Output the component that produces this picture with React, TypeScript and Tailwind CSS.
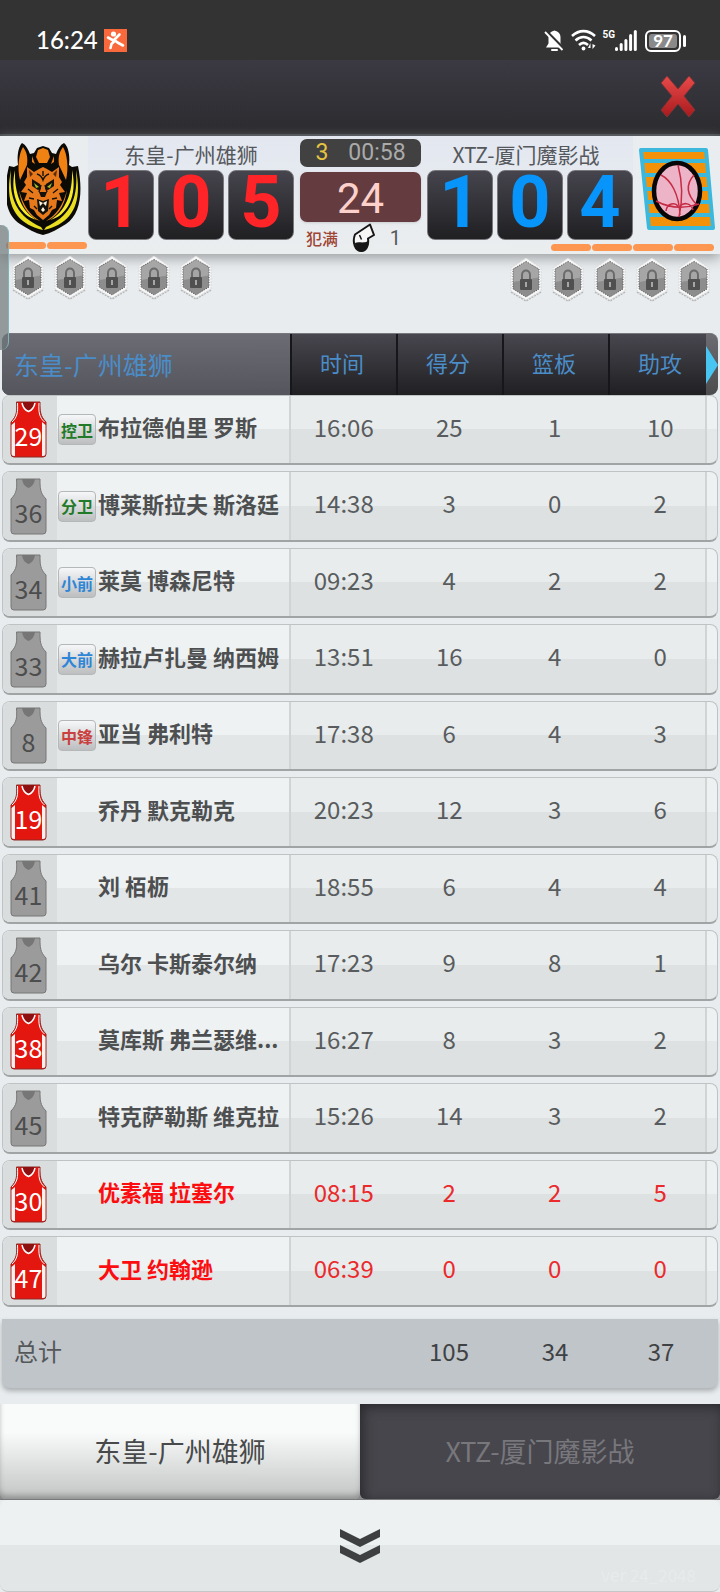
import { useState } from 'react';
import clsx from 'clsx';

interface Player {
  no: number;
  name: string;
  pos?: string;
  time: string;
  pts: number;
  reb: number;
  ast: number;
  home?: boolean;
  out?: boolean;
}

const players: Player[] = [
  { no: 29, name: '布拉德伯里 罗斯', pos: '控卫', time: '16:06', pts: 25, reb: 1, ast: 10, home: true },
  { no: 36, name: '博莱斯拉夫 斯洛廷', pos: '分卫', time: '14:38', pts: 3, reb: 0, ast: 2 },
  { no: 34, name: '莱莫 博森尼特', pos: '小前', time: '09:23', pts: 4, reb: 2, ast: 2 },
  { no: 33, name: '赫拉卢扎曼 纳西姆', pos: '大前', time: '13:51', pts: 16, reb: 4, ast: 0 },
  { no: 8, name: '亚当 弗利特', pos: '中锋', time: '17:38', pts: 6, reb: 4, ast: 3 },
  { no: 19, name: '乔丹 默克勒克', time: '20:23', pts: 12, reb: 3, ast: 6, home: true },
  { no: 41, name: '刘 栢枥', time: '18:55', pts: 6, reb: 4, ast: 4 },
  { no: 42, name: '乌尔 卡斯泰尔纳', time: '17:23', pts: 9, reb: 8, ast: 1 },
  { no: 38, name: '莫库斯 弗兰瑟维...', time: '16:27', pts: 8, reb: 3, ast: 2, home: true },
  { no: 45, name: '特克萨勒斯 维克拉', time: '15:26', pts: 14, reb: 3, ast: 2 },
  { no: 30, name: '优素福 拉塞尔', time: '08:15', pts: 2, reb: 2, ast: 5, home: true, out: true },
  { no: 47, name: '大卫 约翰逊', time: '06:39', pts: 0, reb: 0, ast: 0, home: true, out: true },
];

const getPositionColor = (pos: string) => {
  switch (pos) {
    case '控卫':
    case '分卫':
      return 'text-[#217a28]';
    case '中锋':
      return 'text-[#c9403f]';
    default:
      return 'text-[#2f86d6]';
  }
};

const rowGrid = 'grid grid-cols-[288px_repeat(4,1fr)] pr-1';

function StatusBar() {
  return (
    <div className="flex h-[60px] items-end justify-between bg-[#333] pr-[34px] pb-2 pl-9 text-white">
      <div className="flex items-center gap-1.5">
        <span className="font-[Lato,sans-serif] text-[24px] leading-6 font-medium">16:24</span>
        <svg width="23" height="23" viewBox="0 0 23 23">
          <rect width="23" height="23" fill="#f9693b" />
          <circle cx="9.5" cy="5" r="2.6" fill="#fff" />
          <path d="M4 8.500 9.500 11.500 15.500 5.500M10.500 11l3 2.500 5.500 3M10.500 12 7.500 15 6.500 19" fill="none" stroke="#fff" strokeWidth="2.600" strokeLinecap="round" strokeLinejoin="round" />
        </svg>
      </div>
      <div className="flex items-center gap-1.5">
        <svg width="21" height="23" viewBox="0 0 21 23">
          <path d="M10.500 1.500c-4 .8-6 3.500-6 7v6L2 18.500h17l-2.500-4v-6c0-3.500-2-6.200-6-7z" fill="#fff" />
          <path d="M8 21h5" stroke="#fff" strokeWidth="2" strokeLinecap="round" />
          <path d="M2.500 2.500 20 20" stroke="#333" strokeWidth="3" />
          <path d="M1 3 18.500 21" stroke="#fff" strokeWidth="1.800" />
        </svg>
        <svg width="25" height="23" viewBox="0 0 25 23">
          <g fill="none" stroke="#fff" strokeWidth="2.600">
            <path d="M1 7c7-6.500 16-6.500 23 0" />
            <path d="M4.500 11.500c5-4.500 11-4.500 16 0" />
            <path d="M8 16c3-2.800 6-2.800 9 0" />
          </g>
          <circle cx="12.500" cy="19.500" r="1.900" fill="#fff" />
          <path d="M17 19h2.500v-5zM21.500 15v5l3-3.500z" fill="#fff" />
        </svg>
        <div className="flex h-[23px] items-start">
          <span className="font-[Roboto,sans-serif] text-[10px] leading-3 font-bold">5G</span>
          <svg width="22" height="23" viewBox="0 0 22 23" fill="#fff">
            <rect x="0" y="18" width="3" height="4" rx="1.500" />
            <rect x="4.700" y="14" width="3" height="8" rx="1.500" />
            <rect x="9.400" y="10" width="3" height="12" rx="1.500" />
            <rect x="14.100" y="5" width="3" height="17" rx="1.500" />
            <rect x="18.800" y="1" width="3" height="21" rx="1.500" />
          </svg>
        </div>
        <div className="flex items-center gap-0.5 pl-0.5">
          <span className="rounded-[6px] border-2 border-white p-0.5">
            <span className="flex h-[14px] w-7 items-center justify-center rounded-[3px] bg-[#8a8a8a] font-[Lato,sans-serif] text-[17px] leading-4 font-bold">
              97
            </span>
          </span>
          <span className="h-3 w-[3px] rounded-full bg-white" />
        </div>
      </div>
    </div>
  );
}

function LionLogo() {
  return (
    <svg width="74" height="92" viewBox="0 0 74 92">
      <path d="M15 0c4 2 6 6 8 11l4-1 3-5 6-2 6 2 3 5 4 1c2-5 4-9 8-11 5 4 6 14 5 22l3 2 6-1c5 25 3 48-12 58-8 5-15 9-23 11-8-2-15-6-23-11C-3 71-4 48 2 23l5 1 4-2C10 14 11 4 15 0z" fill="#0b0a05" />
      <path d="M16 4c4 5 5 11 4 18l-7 15C10 25 12 10 16 4zM56 4c-4 5-5 11-4 18l7 15c3-12 1-27-3-33z" fill="#f08113" />
      <path d="M4 27c-2 27 4 45 30 57l2 3C9 81-3 62 4 27zM69 27c2 27-4 45-30 57l-2 3c27-6 39-25 32-60z" fill="#e9df20" />
      <path d="M8 27c-1 24 7 42 22 50C13 73 2 53 8 27zM65 27c1 24-7 42-22 50 17-4 28-24 22-50z" fill="#f5ea2a" />
      <path d="M12 47c4 16 11 25 21 31-10-3-19-14-21-31zM60 47c-4 16-11 25-21 31 10-3 19-14 21-31z" fill="#ee8a1c" />
      <path d="m31 7 5-2 5 2 2 7-3 6h-8l-3-6z" fill="#f08113" />
      <path d="M25 13l3 8-3-2zM47 13l-3 8 3-2z" fill="#f08113" />
      <path d="m20 24 7 5 5-3 4-2 4 2 5 3 7-5v10l3 5-2 3 5 7-6 1 3 8-5-1-1 8-4 2-3 5-6 5-6-5-3-5-4-2-1-8-5 1 3-8-6-1 5-7-2-3 3-5z" fill="#e8791a" />
      <path d="m22 27 4 4-3 3zM50 27l-4 4 3 3z" fill="#5c2b0c" />
      <path d="m25 36 8 5 1 5-3 1-6-4zM47 36l-8 5-1 5 3 1 6-4z" fill="#14120a" />
      <path d="m27 40 5 4-3 1zM45 40l-5 4 3 1z" fill="#a8bd2a" />
      <path d="M32 49h8l-2 5h-4z" fill="#14120a" />
      <path d="m30 56 6 2 6-2-1 12-5 4-5-4z" fill="#14120a" />
      <path d="m32 58 1 5 3-3 3 3 1-5-4 2zM34 67l2-3 2 3-2 2z" fill="#fff3dc" />
      <path d="M36 28v5M30 31c3 1 5 3 6 6 1-3 3-5 6-6M34 42l-2 7M38 42l2 7M21 46l5 4M51 46l-5 4M22 55l5 1M50 55l-5 1M27 63l3 3M45 63l-3 3" fill="none" stroke="#14120a" strokeWidth="1.400" />
    </svg>
  );
}

function BallLogo() {
  return (
    <svg width="76" height="82" viewBox="0 0 76 82">
      <path d="M2 2h65l7 78H10z" fill="#f39208" stroke="#3cb8dc" strokeWidth="4" strokeLinejoin="round" />
      <path d="M3 13h65M4 27h65M5 41h66M7 54h65M8 67h65" stroke="#3cb8dc" strokeWidth="4" />
      <ellipse cx="38" cy="43" rx="23" ry="28" fill="#edb3c7" stroke="#090607" strokeWidth="4.500" />
      <g fill="none" stroke="#c62b45" strokeWidth="1.500">
        <path d="M39 17c5 19 5 34 1 52M22 27c10 5 18 19 19 40M55 27c-9 10-7 20 3 30" />
        <path d="M17 53c13 7 28 8 43 3M27 63c1-8 9-9 12-5M54 62c-2-7-9-8-13-4" />
      </g>
    </svg>
  );
}

function LockBadge() {
  return (
    <svg width="32" height="46" viewBox="0 0 32 46">
      <path d="m1 35 15 9 15-9" fill="none" stroke="#b4b6b7" strokeWidth="1.500" strokeDasharray="2 1" />
      <path d="M16 1 31 11v23L16 43 1 34V11z" fill="#f7f7f7" stroke="#d8dadb" strokeDasharray="2 1" />
      <path d="M16 4.500 29 12v20L16 40 3 32V12z" fill="#8d8d8d" stroke="#555" strokeDasharray="1 1.500" />
      <path d="M16 5 28.500 12.500v8L3.500 25V12.500z" fill="#a6a6a6" />
      <path d="M12 23v-5c0-6 8-6 8 0v5" fill="none" stroke="#6b6b6b" strokeWidth="2" />
      <rect x="10" y="22" width="12" height="11" rx="1" fill="#505050" />
      <path d="M16 25v5" stroke="#a6a6a6" strokeWidth="2" />
    </svg>
  );
}

function Jersey({ no, home }: { no: number; home?: boolean }) {
  const shape = 'M6.500 1h23.500c0 9 0 14 6 20v32q0 3-3 3h-29q-3 0-3-3V21c6-6 6-11 5.500-20z';
  return (
    <svg width="37" height="57" viewBox="0 0 37 57" role="img" aria-label={`${no}`}>
      <path d={shape} fill={home ? '#e3170f' : '#9b9b9b'} stroke={home ? '#8e2a27' : '#777'} />
      {home && (
        <>
          <path d="M1.500 24 5 21v34H4q-2.500 0-2.500-2.500zM35.500 24 32 21v34h1q2.500 0 2.500-2.500z" fill="#f6f0ee" />
          <path d="M7.500 2c.5 9 0 14-5.500 19M29 2c-.5 9 0 14 5.500 19" fill="none" stroke="#fff" />
        </>
      )}
      <path d="M12 1h13c-1 6-4 8-6.500 9C16 9 13 7 12 1z" fill={home ? '#8d0f10' : '#767676'} />
      {home && <path d="M12 2c1 5 4 7.500 6.500 8.500C21 9.500 24 7 25 2" fill="none" stroke="#fff" strokeWidth="1.500" />}
      <text x="18.500" y="45" textAnchor="middle" fontSize="25" fill={home ? '#fff' : '#4d4d4d'}>
        {no}
      </text>
    </svg>
  );
}

function Tiles({ score, color }: { score: string; color: string }) {
  return (
    <div className="flex gap-1">
      {score.split('').map((digit, index) => (
        <span
          key={index}
          className={clsx(
            'flex h-[70px] flex-1 items-center justify-center rounded-[8px] border border-[#77777c] bg-linear-to-b from-[#46454e] to-[#202023] pb-1 font-[Roboto,sans-serif] text-[72px] leading-[66px] font-bold',
            color
          )}
        >
          {digit}
        </span>
      ))}
    </div>
  );
}

function Fouls({ count }: { count: number }) {
  return (
    <div className="flex gap-px">
      {Array.from({ length: count }).map((_, index) => (
        <span key={index} className="h-[7px] w-10 rounded-full bg-[#fd9651]" />
      ))}
    </div>
  );
}

function Scoreboard() {
  return (
    <section className="relative grid grid-cols-[88px_1fr_133px_1fr_87px] grid-rows-[106px_12px] bg-linear-to-b from-[#e3e7f0] to-[#ebeeef] shadow-[0_4px_12px_#9a9d9f]">
      <div className="flex items-center justify-center bg-[#e9edf0]">
        <LionLogo />
      </div>
      <div>
        <h2 className="h-[34px] text-center text-[21px] leading-9 text-[#55585c]">东皇-广州雄狮</h2>
        <Tiles score="105" color="text-[#ff2427]" />
      </div>
      <div className="row-span-2 px-1.5 pt-[3px]">
        <div className="flex h-7 items-center justify-center gap-5 rounded-[7px] bg-[#414141] font-[Roboto,sans-serif] text-[23px]">
          <span className="text-[#e6c440]">3</span>
          <span className="text-[#aaa]">00:58</span>
        </div>
        <div className="mt-[5px] flex h-[50px] items-center justify-center rounded-[7px] bg-[#643b3f] pt-1 font-[Roboto,sans-serif] text-[42px] leading-[46px] text-[#fcd0cb] shadow">
          24
        </div>
        <div className="flex h-8 items-center justify-between pr-5 pl-1.5">
          <span className="text-[16px] font-medium text-[#9e4434]">犯满</span>
          <svg width="24" height="30" viewBox="0 0 24 30">
            <path d="M18 1.500 22 12l-6 3.500C17 23 14 28 9.500 28 3 28 0 19 3 11.500z" fill="#f7f7f7" stroke="#161616" strokeWidth="2" strokeLinejoin="round" />
            <path d="M3 20c4-2 8 1 13-2 0 6-2 10.500-6.500 10.500S3 25 3 20z" fill="#161616" />
            <path d="m7.500 12 2 4.500" stroke="#161616" strokeWidth="1.500" />
          </svg>
          <span className="font-[Roboto,sans-serif] text-[20px] text-[#55585c]">1</span>
        </div>
      </div>
      <div>
        <h2 className="h-[34px] pr-2 text-center text-[21px] leading-9 text-[#55585c]">XTZ-厦门魔影战</h2>
        <Tiles score="104" color="text-[#0795fb]" />
      </div>
      <div className="flex items-center justify-center bg-[#e9edf0]">
        <BallLogo />
      </div>
      <div className="col-span-2 pl-1.5">
        <Fouls count={2} />
      </div>
      <div className="col-span-2 flex justify-end pt-0.5 pr-1.5">
        <Fouls count={4} />
      </div>
    </section>
  );
}

function StatCell({ children, out }: { children: React.ReactNode; out?: boolean }) {
  return (
    <td className={clsx('flex items-center justify-center pb-1.5 text-[24px]', out ? 'text-[#ea2a2c]' : 'text-[#595c5e]')}>
      {children}
    </td>
  );
}

function PlayerRow({ player }: { player: Player }) {
  return (
    <tr
      className={clsx(
        rowGrid,
        'relative h-[70px] overflow-hidden rounded-[8px] border border-b-2 border-[#bfc3c4] border-b-[#a0a4a5] bg-linear-to-b from-[#e8ecec] from-50% to-[#dde1e1] to-50% even:h-[71px]'
      )}
    >
      <td className="flex border-r-2 border-[#d0d4d5] bg-linear-to-b from-[#eef2f3] from-50% to-[#e2e6e7] to-50%">
        <span className="flex w-[54px] items-center bg-[#d9dddd] pl-[7px]">
          <Jersey no={player.no} home={player.home} />
        </span>
        <span className="flex w-10 items-center pl-px">
          {player.pos && (
            <span
              className={clsx(
                'flex h-[31px] w-[38px] items-center justify-center rounded-[4px] border border-[#b5b8b9] bg-linear-to-b from-[#f6f7f8] to-[#bcbebf] text-[16px] font-bold',
                getPositionColor(player.pos)
              )}
            >
              {player.pos}
            </span>
          )}
        </span>
        <span
          className={clsx(
            'flex items-center pb-1.5 pl-px text-[22px] font-bold whitespace-nowrap',
            player.out ? 'text-[#fb0d10]' : 'text-[#4d4f50]'
          )}
        >
          {player.name}
        </span>
      </td>
      <StatCell out={player.out}>{player.time}</StatCell>
      <StatCell out={player.out}>{player.pts}</StatCell>
      <StatCell out={player.out}>{player.reb}</StatCell>
      <StatCell out={player.out}>{player.ast}</StatCell>
      <td aria-hidden="true" className="absolute inset-y-0 right-0 w-3 border-l-2 border-[#d0d4d5] bg-white/25" />
    </tr>
  );
}

export default function App() {
  const [tab, setTab] = useState(0);

  return (
    <main className="relative min-h-screen bg-[#e8ecee] font-['Noto_Sans_CJK_SC',sans-serif]">
      <StatusBar />

      {/* Title bar */}
      <header className="flex h-[76px] items-center justify-end border-b-2 border-[#45484c] bg-linear-to-b from-[#3b3a43] to-[#2c2b2f] pr-6">
        <button type="button" aria-label="关闭">
          <svg width="36" height="44" viewBox="0 0 36 44">
            <defs>
              <linearGradient id="close" x1="0" y1="0" x2="0" y2="1">
                <stop offset="0" stopColor="#ea4a4a" />
                <stop offset="1" stopColor="#a81a1d" />
              </linearGradient>
            </defs>
            <path d="m7 1 11 13L29 1l6 7-11 13 11 14-6 7-11-13L7 42l-6-7 11-14L1 8z" fill="url(#close)" stroke="#7c3435" />
          </svg>
        </button>
      </header>

      <Scoreboard />

      {/* Locked skills */}
      <div className="relative flex h-[79px] items-start justify-between pt-px pr-2.5 pl-3">
        <div className="flex gap-2.5">
          {[0, 1, 2, 3, 4].map((i) => <LockBadge key={i} />)}
        </div>
        <div className="flex gap-2.5 pt-0.5">
          {[0, 1, 2, 3, 4].map((i) => <LockBadge key={i} />)}
        </div>
      </div>

      {/* Box score */}
      <table className="block px-0.5">
        <thead className="block">
          <tr className={clsx(rowGrid, 'relative h-[62px] overflow-hidden rounded-[8px] border-t border-[#77777c] bg-linear-to-b from-[#48474f] to-[#202023] text-[#4a8dc8]')}>
            <th className="flex items-center bg-linear-to-b from-[#6c6c74] to-[#55555d] pl-3 text-[25px] font-normal">东皇-广州雄狮</th>
            {['时间', '得分', '篮板', '助攻'].map((label) => (
              <th key={label} className="flex items-center justify-center border-l-2 border-[#17171b] pr-1 pb-1 text-[22px] font-normal">
                {label}
              </th>
            ))}
            <th aria-hidden="true" className="absolute inset-y-0 right-0 flex w-3 items-center bg-white/20">
              <svg width="12" height="38" viewBox="0 0 12 38">
                <path d="M0 0 12 19 0 38z" fill="#48c5f1" />
              </svg>
            </th>
          </tr>
        </thead>
        <tbody className="flex flex-col gap-1.5">
          {players.map((player) => (
            <PlayerRow key={player.no} player={player} />
          ))}
        </tbody>
        <tfoot className="block pt-3">
          <tr className={clsx(rowGrid, 'h-[69px] rounded-b-[8px] bg-[#c0c5c9] text-[#3f4244] shadow-[0_3px_5px_#aaaeb0]')}>
            <th className="flex items-center pb-1.5 pl-3 text-[24px] font-normal text-[#55585b]">总计</th>
            <td />
            {[105, 34, 37].map((total) => (
              <td key={total} className="flex items-center justify-center pb-1.5 text-[24px]">
                {total}
              </td>
            ))}
          </tr>
        </tfoot>
      </table>

      {/* Team tabs */}
      <div className="mt-4 flex h-24 border-b border-[#77797a] bg-[#88898a]">
        {['东皇-广州雄狮', 'XTZ-厦门魔影战'].map((team, index) => (
          <button
            key={team}
            type="button"
            onClick={() => setTab(index)}
            className={clsx(
              'flex-1 rounded-b-[6px] text-[27px]',
              tab === index
                ? 'bg-linear-to-b from-[#f9fbfb] from-30% to-[#c3c5c5] text-[#47494a] shadow-[inset_0_-5px_6px_-2px_#8b8d8c]'
                : 'bg-[#47464c] text-[#77777c] shadow-[inset_3px_3px_12px_#29292d]'
            )}
          >
            {team}
          </button>
        ))}
      </div>

      <button
        type="button"
        aria-label="收起"
        className="relative flex h-[92px] w-full items-center justify-center rounded-[8px] border-b border-[#c4c7c8] bg-linear-to-b from-[#edf1f2] from-50% to-[#e2e6e7] to-50%"
      >
        <svg width="40" height="34" viewBox="0 0 40 34">
          <path d="M0 0 20 10 40 0v8L20 18 0 8zM0 16l20 10 20-10v8L20 34 0 24z" fill="#3d3f40" />
        </svg>
        <span className="absolute right-6 bottom-1 text-[17px] text-[#e8ebec]">ver 24_2048</span>
      </button>

      {/* Drawer handle */}
      <div className="absolute top-[225px] left-0 h-[125px] w-[9px] rounded-r-[8px] border-r border-[#7fb4bd] bg-[#6d7779]/70" />
    </main>
  );
}
